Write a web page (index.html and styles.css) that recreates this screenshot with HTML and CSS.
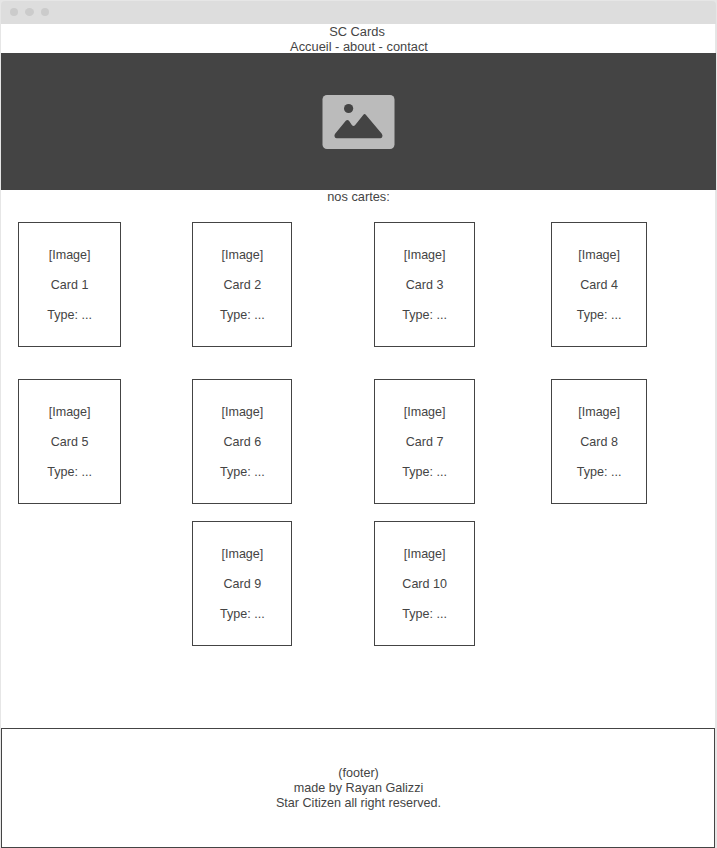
FILE: index.html
```
<!DOCTYPE html>
<html lang="fr">
<head>
<meta charset="utf-8">
<title>SC Cards</title>
<link rel="stylesheet" href="styles.css">
</head>
<body>
<div class="window">
  <div class="titlebar"><span class="dot"></span><span class="dot dot-wide"></span><span class="dot"></span></div>
  <header class="header">
    <div class="site-name">SC Cards</div>
    <nav>Accueil - about - contact</nav>
  </header>
  <div class="banner">
    <svg class="picture" width="73" height="54" viewBox="0 0 73 54">
      <rect x=".5" width="72" height="54" rx="4.5" fill="#bbb"/>
      <circle cx="26.6" cy="13.5" r="4.6" fill="#444"/>
      <path d="M13.1 38.8 23.8 25.8Q25.4 24 27 25.8L30 30.2Q31.5 31.7 33 30.2L41.2 20Q42.6 18.2 44 20L59.8 38.8Q61 40.5 60.2 42Q59.6 43.2 58.2 43.2H14.8Q13.3 43.2 12.7 42Q12 40.3 13.1 38.8Z" fill="#444"/>
    </svg>
  </div>
  <h1 class="heading">nos cartes:</h1>
  <main class="cards">
    <article class="card"><p>[Image]</p><p>Card 1</p><p>Type: ...</p></article>
    <article class="card"><p>[Image]</p><p>Card 2</p><p>Type: ...</p></article>
    <article class="card"><p>[Image]</p><p>Card 3</p><p>Type: ...</p></article>
    <article class="card"><p>[Image]</p><p>Card 4</p><p>Type: ...</p></article>
    <article class="card"><p>[Image]</p><p>Card 5</p><p>Type: ...</p></article>
    <article class="card"><p>[Image]</p><p>Card 6</p><p>Type: ...</p></article>
    <article class="card"><p>[Image]</p><p>Card 7</p><p>Type: ...</p></article>
    <article class="card"><p>[Image]</p><p>Card 8</p><p>Type: ...</p></article>
    <article class="card card-last-row"><p>[Image]</p><p>Card 9</p><p>Type: ...</p></article>
    <article class="card"><p>[Image]</p><p>Card 10</p><p>Type: ...</p></article>
  </main>
  <footer class="footer">
    <div>(footer)</div>
    <div>made by Rayan Galizzi</div>
    <div>Star Citizen all right reserved.</div>
  </footer>
</div>
</body>
</html>
```
FILE: styles.css
```
* { box-sizing: border-box; }
body {
  margin: 0;
  background: #e6e6e6;
  color: #444;
  font: 12.6px/15px "Liberation Sans", Arial, sans-serif;
  text-align: center;
}
.window {
  display: flex;
  flex-direction: column;
  height: 848px;
  padding: 1px 1px 0;
}
.titlebar {
  display: flex;
  align-items: flex-start;
  gap: 7px;
  height: 23px;
  padding: 7px 9px 0;
  border-radius: 4px 4px 0 0;
  background: #ddd;
}
.dot {
  width: 8px;
  height: 8px;
  border-radius: 50%;
  background: #cbcbcb;
}
.dot-wide { width: 9px; }
.header {
  height: 29px;
  margin-right: 1px;
  padding-left: 2px;
  background: #fff;
  font-size: 12.85px;
}
.site-name { padding-right: 4px; }
.banner {
  display: flex;
  align-items: center;
  justify-content: center;
  height: 137px;
  padding-right: 1px;
  background: #444;
}
.picture { display: block; }
.heading {
  height: 32px;
  margin: 0 1px 0 0;
  padding-left: 1px;
  background: #fff;
  font: inherit;
  font-size: 12.8px;
  line-height: 13px;
}
.cards {
  display: grid;
  flex: 1;
  grid-template-columns: 174px 182px 177px 96px;
  grid-template-rows: 157px 142px 125px;
  margin-right: 1px;
  padding-left: 17px;
  background: #fff;
}
.card {
  width: 101px;
  height: 125px;
  padding-top: 25px;
  padding-left: 0.3px;
  border: 1px solid #444;
  font-size: 12.55px;
}
.card:nth-child(4n + 1) { width: 103px; }
.card:nth-child(4n + 2) {
  width: 100px;
  padding-left: 0.8px;
}
.card:nth-child(4n) { width: 96px; }
.card p { margin: 0 0 15px; }
.card.card-last-row {
  grid-column: 2;
  width: 100px;
  padding-left: 0.8px;
}
.card-last-row + .card {
  width: 101px;
  padding-left: 0.3px;
}
.footer {
  height: 120px;
  margin-right: 1px;
  padding: 37px 0 0 1px;
  border: 1px solid #444;
  background: #fff;
}
```
